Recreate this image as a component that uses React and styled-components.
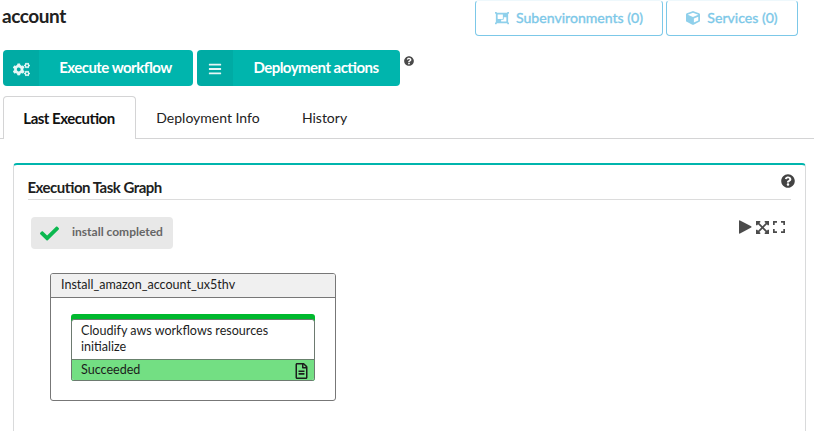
import React from "react";
import styled, { createGlobalStyle } from "styled-components";
import { FaCogs, FaBars, FaQuestionCircle, FaObjectGroup, FaCube, FaCheck, FaRegFileAlt } from "react-icons/fa";

const GlobalStyle = createGlobalStyle`
  * { box-sizing: border-box; }
  body {
    margin: 0;
    background: #fff;
    color: #212121;
    font-family: Lato, "Open Sans", sans-serif;
    font-size: 14px;
    overflow: hidden;
  }
`;

const Page = styled.main`
  display: flex;
  flex-direction: column;
  height: 435px;
  overflow: hidden;
`;

const Header = styled.header`
  display: flex;
  justify-content: space-between;
  align-items: flex-start;
  height: 50px;
  padding: 0 16px 0 2px;
`;

const Title = styled.h1`
  margin: 4px 0 0;
  font-size: 19px;
  line-height: 24px;
  font-weight: 700;
  letter-spacing: -0.45px;
`;

const LinkGroup = styled.div`
  display: flex;
  gap: 3px;
`;

const LinkButton = styled.button`
  display: flex;
  align-items: center;
  justify-content: center;
  gap: 7px;
  width: ${(p) => p.$width}px;
  height: 36px;
  padding: 0;
  border: 1px solid #7cc8e8;
  border-top-color: #eef8fc;
  border-radius: 4px;
  background: #fff;
  color: #7cc8e8;
  font: 400 14.1px/20px Lato, sans-serif;
  -webkit-text-stroke: 0.35px currentColor;
  svg { width: 14px; height: 14px; opacity: 0.85; }
`;

const Actions = styled.div`
  display: flex;
  gap: 4px;
  height: 46px;
  padding-left: 3px;
  align-items: flex-start;
`;

const ActionButton = styled.button`
  display: flex;
  width: ${(p) => p.$width}px;
  height: 36px;
  padding: 0;
  border: 0;
  border-radius: 4px;
  overflow: hidden;
  background: #00b5ad;
  color: #fff;
  font: 700 15px/34px Lato, sans-serif;
  letter-spacing: -0.53px;
  font-feature-settings: "liga" 1;
`;

const ActionIcon = styled.span`
  display: flex;
  align-items: center;
  justify-content: center;
  width: 36px;
  height: 36px;
  background: rgba(0, 0, 0, 0.05);
  svg { width: ${(p) => p.$size}px; height: ${(p) => p.$size}px; margin-top: 2px; opacity: 0.9; }
`;

const ActionLabel = styled.span`
  flex: 1;
  padding-right: 1px;
  text-align: center;
`;

const SmallHelp = styled(FaQuestionCircle)`
  width: 10px;
  height: 10px;
  margin: 6px 0 0 -0.5px;
  color: #4a4a4a;
`;

const Tabs = styled.nav`
  display: flex;
  height: 43px;
  padding-left: 3px;
  border-bottom: 1px solid #d4d4d5;
`;

const Tab = styled.button`
  width: ${(p) => p.$width}px;
  height: 43px;
  padding: 0 1px 1px 0;
  border: 1px solid ${(p) => (p.$active ? "#d4d4d5" : "transparent")};
  border-bottom: 0;
  border-radius: 4px 4px 0 0;
  background: ${(p) => (p.$active ? "#fff" : "transparent")};
  color: ${(p) => (p.$active ? "#111" : "#222")};
  font: ${(p) => (p.$active ? "700 15px" : "400 14px")}/20px Lato, sans-serif;
  letter-spacing: ${(p) => (p.$active ? "-0.5px" : "normal")};
  font-feature-settings: "liga" 1;
`;

const Panel = styled.section`
  width: 793px;
  height: 268px;
  margin: 24px 0 0 13px;
  padding: 2px 14px 0;
  border: 1px solid #d9dadb;
  border-top: 2px solid #00b5ad;
  border-bottom: 0;
  border-radius: 4px 4px 0 0;
`;

const PanelHeader = styled.div`
  display: flex;
  justify-content: space-between;
  height: 33px;
  border-bottom: 1px solid #dcdcdc;
  svg { width: 14px; height: 14px; margin: 7px -4px 0 0; color: #434343; }
`;

const PanelTitle = styled.h2`
  margin: 10px 0 0 -0.5px;
  font-size: 15px;
  line-height: 20px;
  font-weight: 700;
  letter-spacing: -0.5px;
  font-feature-settings: "liga" 1;
`;

const Toolbar = styled.div`
  display: flex;
  justify-content: space-between;
  height: 73px;
  padding: 17px 5px 0 3px;
`;

const Status = styled.div`
  display: flex;
  align-items: center;
  gap: 13px;
  width: 142px;
  height: 32px;
  padding-left: 9px;
  border-radius: 4px;
  background: #e8e8e8;
  color: #666;
  font-size: 12px;
  font-weight: 700;
  svg { width: 19px; height: 19px; color: #0bb84f; }
`;

const StatusText = styled.span`
  padding-bottom: 3px;
`;

const Controls = styled.div`
  display: flex;
  gap: 4px;
  align-items: center;
  height: 20px;
  padding-right: 1px;
  color: #4b4b4b;
`;

const Graph = styled.div`
  width: 286px;
  height: 128px;
  margin-left: 22px;
  border: 1px solid #777;
  border-radius: 3px;
  overflow: hidden;
  font-size: 12.55px;
  color: #1c1c1c;
`;

const GraphTitle = styled.div`
  height: 24px;
  padding-left: 10px;
  border-bottom: 1px solid #777;
  background: #f0f0f0;
  line-height: 21px;
`;

const Task = styled.article`
  width: 244px;
  height: 67px;
  margin: 16px 0 0 20px;
  border-radius: 3px;
  background: #00b92e;
  padding-top: 5px;
`;

const TaskBody = styled.div`
  height: 62px;
  border: 1px solid #6d7a70;
  border-radius: 3px;
  overflow: hidden;
  background: #fff;
`;

const TaskName = styled.div`
  height: 39px;
  padding: 3px 9px 0;
  line-height: 16px;
`;

const TaskState = styled.div`
  display: flex;
  justify-content: space-between;
  height: 21px;
  padding: 0 6px 0 9px;
  border-top: 1px solid #68816c;
  background: #73df83;
  line-height: 20px;
  svg { width: 13px; height: 16px; margin-top: 3px; }
`;

function Play() {
  return (
    <svg width="13" height="14" viewBox="0 0 13 14" fill="currentColor">
      <path d="M0 1.1Q0 0 1 .5L12.2 6.3Q13 7 12.2 7.6L1 13.5Q0 14 0 12.9z" />
    </svg>
  );
}

function ExpandArrows() {
  return (
    <svg width="13" height="13" viewBox="0 0 13 13" fill="currentColor">
      <path d="M0 0h4.3v1.3L3.3 2l3.2 3.3L9.7 2l-1-.7V0H13v4.3h-1.3l-.7-1-3.3 3.2L11 9.7l.7-1H13V13H8.7v-1.3l1-.7-3.2-3.3L3.3 11l1 .7V13H0V8.7h1.3l.7 1 3.3-3.2L2 3.3l-.7 1H0z" />
    </svg>
  );
}

function Corners() {
  return (
    <svg width="12" height="12" viewBox="0 0 12 12" fill="none" stroke="currentColor" strokeWidth="1.7">
      <path d="M.85 4V.85H4M8 .85h3.15V4M11.15 8v3.15H8M4 11.15H.85V8" />
    </svg>
  );
}

export default function App() {
  return (
    <Page>
      <GlobalStyle />
      <Header>
        <Title>account</Title>
        <LinkGroup>
          <LinkButton $width={188}><FaObjectGroup />Subenvironments (0)</LinkButton>
          <LinkButton $width={132}><FaCube />Services (0)</LinkButton>
        </LinkGroup>
      </Header>
      <Actions>
        <ActionButton $width={190}>
          <ActionIcon $size={17}><FaCogs /></ActionIcon>
          <ActionLabel>Execute workflow</ActionLabel>
        </ActionButton>
        <ActionButton $width={203}>
          <ActionIcon $size={14}><FaBars /></ActionIcon>
          <ActionLabel>Deployment actions</ActionLabel>
        </ActionButton>
        <SmallHelp />
      </Actions>
      <Tabs>
        <Tab $active $width={133}>Last Execution</Tab>
        <Tab $width={145}>Deployment Info</Tab>
        <Tab $width={88}>History</Tab>
      </Tabs>
      <Panel>
        <PanelHeader>
          <PanelTitle>Execution Task Graph</PanelTitle>
          <FaQuestionCircle />
        </PanelHeader>
        <Toolbar>
          <Status><FaCheck /><StatusText>install completed</StatusText></Status>
          <Controls>
            <Play />
            <ExpandArrows />
            <Corners />
          </Controls>
        </Toolbar>
        <Graph>
          <GraphTitle>Install_amazon_account_ux5thv</GraphTitle>
          <Task>
            <TaskBody>
              <TaskName>Cloudify aws workflows resources initialize</TaskName>
              <TaskState>Succeeded<FaRegFileAlt /></TaskState>
            </TaskBody>
          </Task>
        </Graph>
      </Panel>
    </Page>
  );
}
